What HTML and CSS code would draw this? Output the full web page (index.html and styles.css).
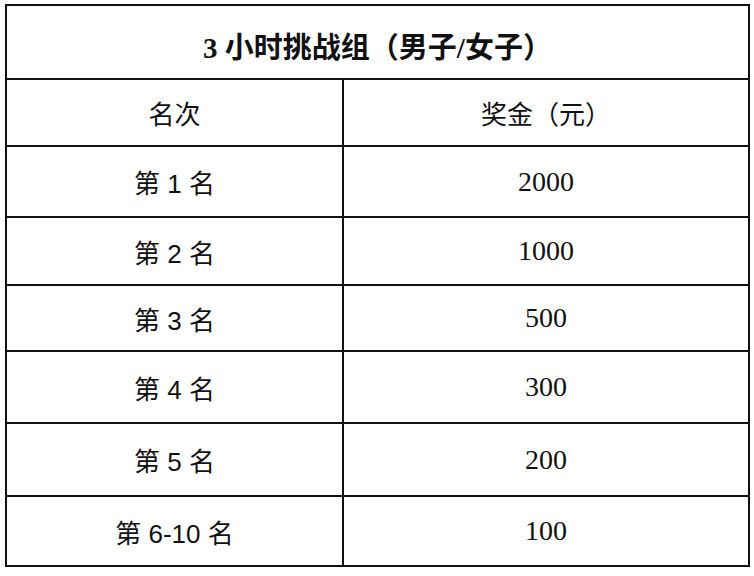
FILE: index.html
```html
<!DOCTYPE html>
<html lang="zh">
<head>
<meta charset="utf-8">
<link rel="stylesheet" href="styles.css">
</head>
<body>
<table class="prize">
  <colgroup><col class="c-rank"><col class="c-amt"></colgroup>
  <tr class="r-title"><th colspan="2" class="title">3 小时挑战组（男子/女子）</th></tr>
  <tr class="r-head"><td class="head">名次</td><td class="head">奖金（元）</td></tr>
  <tr class="r1"><td class="rank">第 1 名</td><td class="amt">2000</td></tr>
  <tr class="r2"><td class="rank">第 2 名</td><td class="amt">1000</td></tr>
  <tr class="r3"><td class="rank">第 3 名</td><td class="amt">500</td></tr>
  <tr class="r4"><td class="rank">第 4 名</td><td class="amt">300</td></tr>
  <tr class="r5"><td class="rank">第 5 名</td><td class="amt">200</td></tr>
  <tr class="r6"><td class="rank">第 6-10 名</td><td class="amt">100</td></tr>
</table>
</body>
</html>
```
FILE: styles.css
```css
html, body {
  margin: 0;
  padding: 0;
  background: #fff;
}
body {
  padding: 4px 0 0 5px;
}
.prize {
  border-collapse: collapse;
  width: 743px;
  table-layout: fixed;
  color: #111;
}
.c-rank { width: 337px; }
.c-amt { width: 406px; }
.prize th, .prize td {
  border: 2px solid #111;
  padding: 0;
  text-align: center;
  vertical-align: middle;
}
.title {
  font-family: "Liberation Serif", "Noto Sans CJK SC", serif;
  font-size: 29px;
  font-weight: 700;
  padding-top: 6px !important;
}
.head {
  font-family: "Liberation Serif", "Noto Sans CJK SC", serif;
  font-size: 26px;
  font-weight: 400;
}
.rank {
  font-family: "Liberation Sans", "Noto Sans CJK SC", sans-serif;
  font-size: 26px;
}
.amt {
  font-family: "Liberation Serif", "Noto Sans CJK SC", serif;
  font-size: 28px;
}
.r-title { height: 74px; }
.r-head { height: 67px; }
.r1 { height: 71px; }
.r2 { height: 68px; }
.r3 { height: 66px; }
.r4 { height: 72px; }
.r5 { height: 73px; }
.r6 { height: 70px; }
```
